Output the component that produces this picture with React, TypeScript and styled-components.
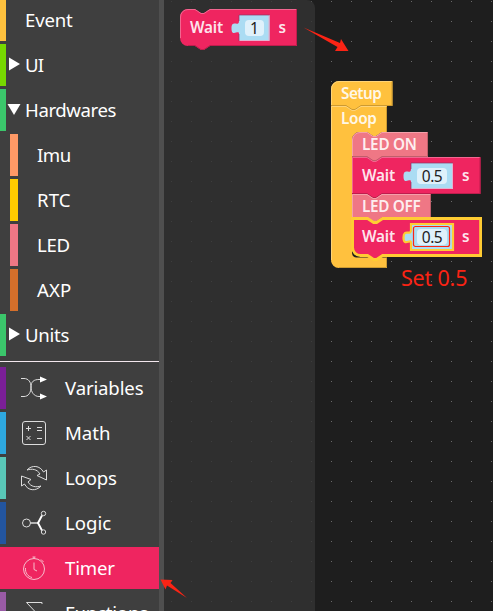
import React from "react";
import styled, { createGlobalStyle } from "styled-components";

const GlobalStyle = createGlobalStyle`
  * { box-sizing: border-box; }
  html, body { margin: 0; padding: 0; background: #1e1e1e; overflow: hidden; }
`;

const Editor = styled.div`
  position: relative;
  display: grid;
  grid-template-columns: 159px 5px 1fr;
  width: 493px;
  height: 611px;
  overflow: hidden;
  background: #1e1e1e;
  color: #fff;
  font-family: "Noto Sans", "Open Sans", sans-serif;
`;

const Toolbox = styled.nav`
  display: flex;
  flex-direction: column;
  height: 611px;
  overflow: hidden;
  background: #3f3f3f;
`;

const Scrollbar = styled.div`
  background: #4f4f4f;
`;

const Group = styled.div<{ $first?: boolean }>`
  display: flex;
  flex-direction: column;
  flex: none;
  gap: 3px;
  margin-top: ${(p) => (p.$first ? "-1px" : "0")};
`;

const Row = styled.div<{ $color: string; $kind: "top" | "child" | "icon"; $active?: boolean }>`
  display: flex;
  align-items: center;
  flex: none;
  height: 42px;
  margin-left: ${(p) => (p.$kind === "child" ? "10px" : "0")};
  border-left: ${(p) => (p.$kind === "child" ? 8 : 6)}px solid ${(p) => p.$color};
  background: ${(p) => (p.$active ? p.$color : "transparent")};
`;

const Gutter = styled.div<{ $w: number }>`
  display: flex;
  align-items: center;
  flex: none;
  width: ${(p) => p.$w}px;
`;

const IconSlot = styled.div`
  display: flex;
  margin-left: 14px;
`;

const RowLabel = styled.span<{ $spacing: number }>`
  font-size: 18.6px;
  line-height: 42px;
  letter-spacing: ${(p) => p.$spacing}px;
  white-space: nowrap;
`;

const Divider = styled.div`
  flex: none;
  height: 1px;
  margin: 5px 0 5px;
  background: #f4e8ee;
`;

const Workspace = styled.main`
  position: relative;
  background-color: #1e1e1e;
  background-image: radial-gradient(circle at 7.5px 1.5px, #6a6a6a 0.6px, transparent 0.7px);
  background-size: 20px 20px;
`;

const Flyout = styled.section`
  width: 151px;
  height: 611px;
  padding: 9px 0 0 16px;
  border-top-right-radius: 8px;
  background: rgba(51, 51, 51, 0.8);
`;

/* Block stacks are dropped freely on the canvas. */
const Stack = styled.div`
  position: absolute;
  left: 167px;
  top: 81px;
`;

const LoopBody = styled.div`
  position: relative;
  width: 56px;
  height: 162px;
`;

const LoopHeader = styled.div`
  display: flex;
  align-items: center;
  height: 26px;
  padding: 0 0 2px 10px;
`;

const LoopChildren = styled.div`
  display: flex;
  flex-direction: column;
  padding-left: 21px;
`;

const BlockBox = styled.div<{ $w: number; $h: number }>`
  position: relative;
  display: flex;
  align-items: center;
  width: ${(p) => p.$w}px;
  height: ${(p) => p.$h}px;
  padding-left: 10px;
`;

const Shape = styled.svg`
  position: absolute;
  left: 0;
  top: 0;
  overflow: visible;
`;

const BlockLabel = styled.span<{ $w?: number; $spacing?: number }>`
  position: relative;
  flex: none;
  width: ${(p) => (p.$w ? `${p.$w}px` : "auto")};
  padding-bottom: 1px;
  font-size: 15.3px;
  font-weight: 600;
  line-height: 22px;
  letter-spacing: ${(p) => p.$spacing ?? 0}px;
  white-space: nowrap;
  color: rgba(255, 255, 255, 0.9);
`;

const ValueBox = styled.div<{ $w: number }>`
  position: relative;
  display: flex;
  align-items: center;
  justify-content: center;
  flex: none;
  width: ${(p) => p.$w}px;
  height: 26px;
  margin: 1px 9px 0 0;
`;

const ValueText = styled.span<{ $w: number }>`
  position: relative;
  width: ${(p) => p.$w - 12}px;
  height: 16px;
  border-radius: 4px;
  background: #dff1fb;
  color: #222;
  font-size: 15.5px;
  line-height: 16px;
  letter-spacing: -0.5px;
  text-align: center;
`;

const Annotation = styled.span`
  position: absolute;
  left: 401px;
  top: 264px;
  color: #f92314;
  font-size: 21.5px;
  line-height: 28px;
  letter-spacing: -0.2px;
  white-space: nowrap;
`;

const Arrows = styled.svg`
  position: absolute;
  left: 0;
  top: 0;
  pointer-events: none;
`;

const NOTCH = "l6,4 h3 l6,-4";
const BUMP = "l-6,4 h-3 l-6,-4";

type BlockProps = {
  w: number;
  h: number;
  color: string;
  light: string;
  dark: string;
  roundTop?: boolean;
  roundBottom?: boolean;
  hat?: boolean;
  selected?: boolean;
  children: React.ReactNode;
};

function Block({ w, h, color, light, dark, roundTop, roundBottom, hat, selected, children }: BlockProps) {
  const start = roundTop ? "M0,8 a8,8 0 0 1 8,-8" : "M0,0";
  const top = `${start} H15 ${hat ? "" : NOTCH} H${w}`;
  const end = roundBottom ? `H8 a8,8 0 0 1 -8,-8` : "H0";
  const full = `${top} V${h} H30 ${BUMP} ${end} Z`;
  return (
    <BlockBox $w={w} $h={h}>
      <Shape width={w} height={h + 5}>
        <path d={full} fill={color} />
        {selected ? (
          <path d={full} fill="none" stroke="#fc3" strokeWidth="2.8" transform="translate(.6 .5)" />
        ) : (
          <>
            <path d={`M${w - 0.5},0.5 V${h - 0.5} H30 ${BUMP} ${roundBottom ? "H8" : "H0"}`} fill="none" stroke={dark} />
            <path
              d={`M0.5,${h - (roundBottom ? 8 : 1)} V${roundTop ? 8 : 0.5} ${roundTop ? "a7.5,7.5 0 0 1 7.5,-7.5" : ""} H15 ${hat ? "" : NOTCH} H${w - 1}`}
              fill="none"
              stroke={light}
            />
          </>
        )}
      </Shape>
      {children}
    </BlockBox>
  );
}

function NumberInput({ value, w, selected }: { value: string; w: number; selected?: boolean }) {
  const path = `M0,0 H${w} V26 H0 V19 c0,-5 -7.5,4 -7.5,-5.5 s7.5,-1 7.5,-7.5 Z`;
  return (
    <ValueBox $w={w}>
      <Shape width={w} height={26}>
        <path d={path} fill="#abdcf3" stroke={selected ? "#fc3" : "none"} strokeWidth="2.2" />
        {!selected && (
          <>
            <path d={`M${w - 0.5},0 V25.5 H0`} fill="none" stroke="#e3b3cf" />
            <path d={`M0,0 H${w} M0,0 V6 M0,19 V26`} fill="none" stroke="#8d3564" strokeWidth=".7" />
          </>
        )}
      </Shape>
      <ValueText $w={w}>{value}</ValueText>
      {selected && (
        <Shape width={w} height={26}>
          <rect x="2.5" y="2.5" width="36" height="20" rx="2" fill="none" stroke="#fb2415" strokeWidth="1.2" />
        </Shape>
      )}
    </ValueBox>
  );
}

const pink = { color: "#ef2560", light: "#f26690", dark: "#bf1d4d" };
const rose = { color: "#ef7785", light: "#f4a0aa", dark: "#bf5f6a" };
const amber = { color: "#ffc13e", light: "#ffd478", dark: "#cc9a32" };

type WaitProps = {
  value: string;
  fieldWidth: number;
  roundTop?: boolean;
  roundBottom?: boolean;
  selected?: boolean;
};

function WaitBlock({ value, fieldWidth, ...rest }: WaitProps) {
  return (
    <Block w={fieldWidth + (rest.selected ? 86 : 86.5)} h={37} {...pink} {...rest}>
      <BlockLabel $w={49} $spacing={-0.2}>Wait</BlockLabel>
      <NumberInput value={value} w={fieldWidth} selected={rest.selected} />
      <BlockLabel>s</BlockLabel>
    </Block>
  );
}

const LOOP_PATH =
  "M0,0 H15 l6,4 h3 l6,-4 H56 V26 H51 l-6,4 h-3 l-6,-4 H29 a8,8 0 0 0 -8,8 V147 a4.5,4.5 0 0 0 4.5,4.5 H56 V162 H8 a8,8 0 0 1 -8,-8 Z";

function Triangle({ open }: { open?: boolean }) {
  return (
    <svg width="19" height="20" viewBox="0 0 19 20" fill="#fff">
      <path d={open ? "M1.5,4 H14.5 L8,15 Z" : "M3,2.5 V15.5 L14,9 Z"} />
    </svg>
  );
}

const iconProps = { width: 28, height: 28, viewBox: "0 0 28 28", fill: "none", stroke: "#ddd", strokeWidth: 1 };

const icons: Record<string, React.ReactNode> = {
  Variables: (
    <svg {...iconProps}>
      <path d="M1,4.5 H4 C8.5,4.5 11,8 11,13 S14,22.5 19,22.5 H21 M1,22.5 H4 C8.5,22.5 11,18.5 11,13 S14,5.5 19,5.5 H21" />
      <path d="M20,2.5 L27,5.5 L20,8.5 Z M20,19.5 L27,22.5 L20,25.5 Z" fill="#fff" stroke="none" />
    </svg>
  ),
  Math: (
    <svg {...iconProps}>
      <rect x="2.5" y="2.5" width="23" height="23" rx="2.5" />
      <path d="M6,9.5 H11 M8.5,7 V12 M17,8.5 H22 M17,11.5 H22 M6.5,17 L10.5,21 M10.5,17 L6.5,21 M17,19.5 H22" />
    </svg>
  ),
  Loops: (
    <svg {...iconProps}>
      <path d="M7,6 C12,0.5 20,1.5 23.5,8 L26.5,6 V16 L17,11.5 L20,10 C17,5 12,4.5 7,6 Z" />
      <path d="M21,22 C16,27.5 8,27 4.5,20 L1.5,22 V12 L11,15.5 L8,18 C11,23 16,23.5 21,22 Z" />
    </svg>
  ),
  Logic: (
    <svg {...iconProps}>
      <circle cx="6.5" cy="14" r="4" />
      <path d="M10.5,14 H18" strokeWidth="1.5" />
      <path d="M22,6.5 L18,14 L22,21.5" stroke="#fff" strokeWidth="1.9" />
      <circle cx="23.5" cy="4.5" r="2.2" />
      <circle cx="23.5" cy="23" r="2.2" />
    </svg>
  ),
  Timer: (
    <svg {...iconProps} stroke="#f7bdcb">
      <circle cx="14" cy="15" r="10.5" />
      <path d="M14,8.5 V15.5 L17,17 M12.5,3 H15.5 M14,3 V5 M21,5.5 L23.5,8 M5.5,14 C5,19 8,22.5 12,23.5" />
    </svg>
  ),
  Functions: (
    <svg {...iconProps}>
      <path d="M22,5 V3.5 H6.5 L16,13.5 L6.5,24 H22 V22" />
    </svg>
  ),
};

const blocksMenu = [
  { label: "Event", color: "#ffc13e", kind: "top", spacing: -0.2 },
  { label: "UI", color: "#77d800", kind: "top", arrow: "closed", spacing: -0.8 },
  { label: "Hardwares", color: "#3bc66b", kind: "top", arrow: "open", spacing: -0.4 },
  { label: "Imu", color: "#ff9966", kind: "child", spacing: -0.5 },
  { label: "RTC", color: "#ffcc00", kind: "child", spacing: 0.1 },
  { label: "LED", color: "#ef7785", kind: "child", spacing: -0.3 },
  { label: "AXP", color: "#d46f2b", kind: "child", spacing: 0.1 },
  { label: "Units", color: "#3bc66b", kind: "top", arrow: "closed", spacing: -0.3 },
] as const;

const logicMenu = [
  { label: "Variables", color: "#7b1f97", spacing: -0.15 },
  { label: "Math", color: "#2ea8df", spacing: 0 },
  { label: "Loops", color: "#59c7b7", spacing: -0.15 },
  { label: "Logic", color: "#23559f", spacing: 0 },
  { label: "Timer", color: "#ef2560", spacing: -0.2 },
  { label: "Functions", color: "#995ba5", spacing: -0.2 },
];

export default function App() {
  return (
    <>
      <GlobalStyle />
      <Editor>
        <Toolbox>
          <Group $first>
            {blocksMenu.map((item) => (
              <Row key={item.label} $color={item.color} $kind={item.kind}>
                <Gutter $w={19}>{"arrow" in item && <Triangle open={item.arrow === "open"} />}</Gutter>
                <RowLabel $spacing={item.spacing}>{item.label}</RowLabel>
              </Row>
            ))}
          </Group>
          <Divider />
          <Group>
            {logicMenu.map((item) => (
              <Row key={item.label} $color={item.color} $kind="icon" $active={item.label === "Timer"}>
                <Gutter $w={59}>
                  <IconSlot>{icons[item.label]}</IconSlot>
                </Gutter>
                <RowLabel $spacing={item.spacing}>{item.label}</RowLabel>
              </Row>
            ))}
          </Group>
        </Toolbox>
        <Scrollbar />
        <Workspace>
          <Flyout>
            <WaitBlock value="1" fieldWidth={30.5} roundTop roundBottom />
          </Flyout>
          <Stack>
            <Block w={61.5} h={25} {...amber} roundTop hat>
              <BlockLabel $spacing={-0.5}>Setup</BlockLabel>
            </Block>
            <LoopBody>
              <Shape width={56} height={162}>
                <path d={LOOP_PATH} fill={amber.color} />
                <path d="M0.5,154 V0.5 H15 l6,4 h3 l6,-4 H55" fill="none" stroke={amber.light} />
                <path d="M55.5,1 V26 M55.5,152 V161.5 H8" fill="none" stroke={amber.dark} />
              </Shape>
              <LoopHeader>
                <BlockLabel $spacing={-0.3}>Loop</BlockLabel>
              </LoopHeader>
              <LoopChildren>
                <Block w={76} h={25} {...rose} roundTop>
                  <BlockLabel $spacing={-0.25}>LED ON</BlockLabel>
                </Block>
                <WaitBlock value="0.5" fieldWidth={42} />
                <Block w={79} h={24} {...rose}>
                  <BlockLabel $spacing={-0.3}>LED OFF</BlockLabel>
                </Block>
                <WaitBlock value="0.5" fieldWidth={42} roundBottom selected />
              </LoopChildren>
            </LoopBody>
          </Stack>
        </Workspace>
        <Annotation>Set 0.5</Annotation>
        <Arrows width="493" height="611" fill="#fb2415">
          <path d="M303.5,27.5 L340,43 L341,39 L348.5,51 L335,51 L337.5,47 Z" />
          <path d="M187,598 L167,585.5 L165.5,589.5 L160.5,579.5 L172.5,580 L170.5,583 Z" />
        </Arrows>
      </Editor>
    </>
  );
}
